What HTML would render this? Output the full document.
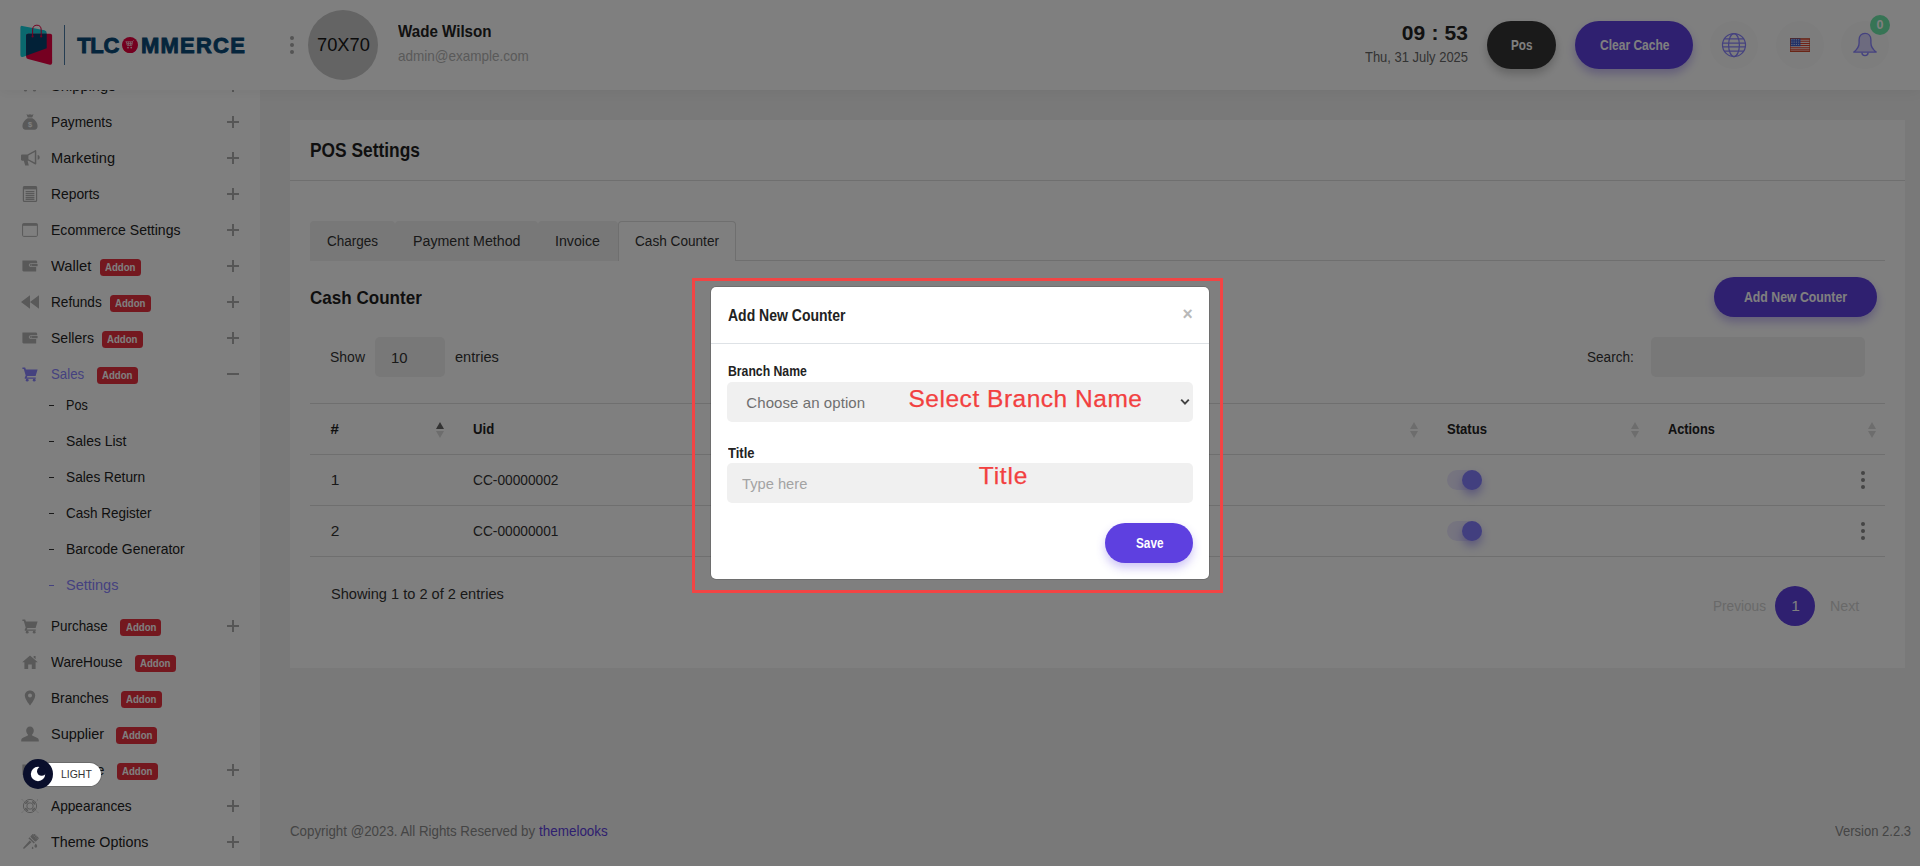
<!DOCTYPE html>
<html lang="en"><head><meta charset="utf-8"><title>POS Settings</title>
<style>
*{box-sizing:border-box;margin:0;padding:0}
html,body{width:1920px;height:866px;overflow:hidden;background:#f2f2f2}
body{font-family:"Liberation Sans",sans-serif;color:#222;position:relative}
.t{position:absolute;white-space:nowrap;line-height:1;display:block;transform-origin:0 0}
.abs{position:absolute}
#page{position:absolute;left:0;top:0;width:1920px;height:866px;overflow:hidden;background:#f2f2f2}
#sidebar{position:absolute;left:0;top:0;width:260px;height:866px;background:#fff;overflow:hidden}
#header{position:absolute;left:0;top:0;width:1920px;height:90px;background:#fff;box-shadow:0 2px 12px rgba(0,0,0,.05);z-index:5}
#card{position:absolute;left:290px;top:120px;width:1615px;height:548px;background:#fff}
.hr{position:absolute;height:1px;background:#dedede}
.badge{position:absolute;height:17px;width:40px;border-radius:3.5px;background:#e8303f;}
.badge .t{color:#fff}
.plus{position:absolute;width:12px;height:12px}
.plus:before{content:"";position:absolute;left:0;top:5.3px;width:12px;height:1.4px;background:#adadad}
.plus.p:after{content:"";position:absolute;left:5.3px;top:0;width:1.4px;height:12px;background:#adadad}
.ico{position:absolute;width:16px;height:16px}
.ico svg{display:block;width:100%;height:100%}
.dash{position:absolute;width:5px;height:1.3px;background:#333}
.tab{position:absolute;top:221px;height:40px;background:#f0f0f0;border-radius:4px 4px 0 0}
.tab.act{background:#fff;border:1px solid #dedede;border-bottom:0;height:40px}
.pill{position:absolute;border-radius:999px}
.inp{position:absolute;background:#f0f0f0;border-radius:5px}
.sort{position:absolute;width:8px;height:16px}
.sort i{position:absolute;left:0;width:0;height:0;border-left:4px solid transparent;border-right:4px solid transparent}
.sort i.u{top:0;border-bottom:7px solid #dadada}
.sort i.d{top:9px;border-top:7px solid #dadada}
.sort.asc i.u{border-bottom-color:#666}
.tog{position:absolute;width:35px;height:20px;border-radius:10px;background:#ece9ff}
.knob{position:absolute;width:20px;height:20px;border-radius:50%;background:#847eff;box-shadow:0 5px 10px rgba(110,96,240,.5)}
.dots{position:absolute;width:4px}
.dots i{display:block;width:4px;height:4px;border-radius:50%;background:#8a8a8a;margin-bottom:3px}
#backdrop{position:absolute;left:0;top:0;width:1920px;height:866px;background:rgba(0,0,0,.5);z-index:10}
#modal{position:absolute;left:711px;top:287px;width:498px;height:292px;background:#fff;box-shadow:0 0 0 .75px rgba(0,0,0,.18);border-radius:5px;z-index:20}
#anno{position:absolute;left:692px;top:278px;width:531px;height:315px;border:3px solid #f24444;z-index:30;pointer-events:none}
.z40{z-index:40}
#theme{position:absolute;z-index:50}

</style></head><body>
<div id="page">
<div id="sidebar">
<span class="ico" style="left:22.0px;top:78.0px;width:16px;height:16px"><svg viewBox="0 0 16 16"><path fill="#b2b2b2" d="M0 4h9v7H0zM10 6h3.5L16 8.5V11h-6z"/><circle cx="3.5" cy="12" r="1.6" fill="#b2b2b2"/><circle cx="12.5" cy="12" r="1.6" fill="#b2b2b2"/></svg></span><span class="t" style="left:51.20px;top:78px;font-size:15px;transform:scaleX(0.9790);color:#222;">Shippings</span><span class="plus p" style="left:227px;top:80px"></span>
<span class="ico" style="left:22.0px;top:114.0px;width:16px;height:16px"><svg viewBox="0 0 16 16"><path fill="#b2b2b2" d="M4.400 0.300c1.200.5 2.400.5 3.600 0 1.200.5 2.400.5 3.600 0l-1.400 3.200H5.800zM5.600 4.300h4.800c3.200 1.900 5.200 4.600 5.200 7.700 0 2.200-1.200 3.700-3.200 3.700H3.600C1.600 15.700.4 14.200.4 12c0-3.100 2-5.800 5.200-7.700z"/><text x="8" y="13.200" font-size="7.500" font-weight="700" text-anchor="middle" fill="#fff" font-family="Liberation Sans, sans-serif">$</text></svg></span><span class="t" style="left:51.20px;top:114px;font-size:15px;transform:scaleX(0.9146);color:#222;">Payments</span><span class="plus p" style="left:227px;top:116px"></span>
<span class="ico" style="left:20.5px;top:150.0px;width:19px;height:16px"><svg viewBox="0 0 19 16"><path fill="#b2b2b2" d="M1.200 4.600h5.200L14.200.2c.5-.3 1.100.1 1.100.7v12.800c0 .6-.6 1-1.100.7l-6.600-3.600H6.600l1.200 4.600H4.200L2.800 10.800H1.200C.5 10.800 0 10.300 0 9.600V5.800c0-.7.500-1.200 1.200-1.200z"/><path fill="#fff" d="M7.400 5.600l6.400-3.600v10.600l-6.400-3.400z"/><path fill="#b2b2b2" d="M16.600 5c1.300.3 2.100 1.200 2.100 2.400s-.8 2.100-2.100 2.400z"/></svg></span><span class="t" style="left:51.20px;top:150px;font-size:15px;transform:scaleX(0.9718);color:#222;">Marketing</span><span class="plus p" style="left:227px;top:152px"></span>
<span class="ico" style="left:22.0px;top:186.0px;width:16px;height:16px"><svg viewBox="0 0 16 16"><rect x="1.400" y="0.600" width="13.200" height="14.800" rx="1" fill="none" stroke="#b2b2b2" stroke-width="1.200"/><path fill="#b2b2b2" d="M1.400 0.600h13.200v2.800H1.400z"/><path stroke="#b2b2b2" stroke-width="1.100" d="M3.600 5.600h8.800M3.600 7.600h8.800M3.600 9.600h8.800M3.600 11.600h8.800M3.600 13.400h8.800"/></svg></span><span class="t" style="left:51.20px;top:186px;font-size:15px;transform:scaleX(0.9234);color:#222;">Reports</span><span class="plus p" style="left:227px;top:188px"></span>
<span class="ico" style="left:22.0px;top:222.0px;width:16px;height:16px"><svg viewBox="0 0 16 16"><rect x="0.600" y="1.600" width="14.800" height="12.800" rx="1" fill="none" stroke="#b2b2b2" stroke-width="1"/><path fill="#b2b2b2" d="M0.600 1.600h14.800v2.200H0.600z"/></svg></span><span class="t" style="left:51.20px;top:222px;font-size:15px;transform:scaleX(0.9358);color:#222;">Ecommerce Settings</span><span class="plus p" style="left:227px;top:224px"></span>
<span class="ico" style="left:22.0px;top:258.0px;width:16px;height:16px"><svg viewBox="0 0 16 16"><path fill="#b2b2b2" d="M0.400 2.600h13.200c1 0 1.600.6 1.600 1.600v1H8.800c-1.200 0-2 .8-2 1.900s.8 1.900 2 1.900h5.400v4.400H1.600c-.7 0-1.200-.5-1.200-1.200z"/><path fill="#b2b2b2" d="M8.800 6h6.800v2.200H8.800a1.100 1.100 0 010-2.200z"/><circle cx="9.200" cy="7.100" r=".6" fill="#fff"/></svg></span><span class="t" style="left:51.20px;top:258px;font-size:15px;transform:scaleX(0.9825);color:#222;">Wallet</span><span class="badge" style="left:100.0px;top:259px;width:41px"><span class="t" style="left:5.25px;top:3px;font-size:11px;transform:scaleX(0.8759);font-weight:700;color:#fff;">Addon</span></span><span class="plus p" style="left:227px;top:260px"></span>
<span class="ico" style="left:21.0px;top:294.0px;width:18px;height:16px"><svg viewBox="0 0 18 16" preserveAspectRatio="none"><path fill="#b2b2b2" d="M9 1.200v13.600L0 8zM18 1.200v13.600L9 8z"/></svg></span><span class="t" style="left:51.20px;top:294px;font-size:15px;transform:scaleX(0.9075);color:#222;">Refunds</span><span class="badge" style="left:110.0px;top:295px;width:41px"><span class="t" style="left:5.25px;top:3px;font-size:11px;transform:scaleX(0.8759);font-weight:700;color:#fff;">Addon</span></span><span class="plus p" style="left:227px;top:296px"></span>
<span class="ico" style="left:22.0px;top:330.0px;width:16px;height:16px"><svg viewBox="0 0 16 16"><path fill="#b2b2b2" d="M0.400 2.600h13.200c1 0 1.600.6 1.600 1.600v1H8.800c-1.200 0-2 .8-2 1.900s.8 1.900 2 1.900h5.400v4.400H1.600c-.7 0-1.200-.5-1.200-1.200z"/><path fill="#b2b2b2" d="M8.800 6h6.800v2.200H8.800a1.100 1.100 0 010-2.200z"/><circle cx="9.200" cy="7.100" r=".6" fill="#fff"/></svg></span><span class="t" style="left:51.20px;top:330px;font-size:15px;transform:scaleX(0.9357);color:#222;">Sellers</span><span class="badge" style="left:102.0px;top:331px;width:41px"><span class="t" style="left:5.25px;top:3px;font-size:11px;transform:scaleX(0.8759);font-weight:700;color:#fff;">Addon</span></span><span class="plus p" style="left:227px;top:332px"></span>
<span class="ico" style="left:22.0px;top:366.0px;width:16px;height:16px"><svg viewBox="0 0 16 16"><path fill="#8a84ff" d="M0.400 1.600h2.800l.7 2h11.700l-2 6.400H5.400l-.6 1.400h9v1.400H3.400c-.6 0-.9-.6-.7-1.100l1-2.300L1.800 3H0.400z"/><circle cx="5.200" cy="14.200" r="1.400" fill="#8a84ff"/><circle cx="12.200" cy="14.200" r="1.400" fill="#8a84ff"/></svg></span><span class="t" style="left:51.20px;top:366px;font-size:15px;transform:scaleX(0.8848);color:#8a84ff;">Sales</span><span class="badge" style="left:97.0px;top:367px;width:41px"><span class="t" style="left:5.25px;top:3px;font-size:11px;transform:scaleX(0.8759);font-weight:700;color:#fff;">Addon</span></span><span class="plus " style="left:227px;top:368px"></span>
<span class="ico" style="left:22.0px;top:618.0px;width:16px;height:16px"><svg viewBox="0 0 16 16"><path fill="#b2b2b2" d="M0.400 1.600h2.800l.7 2h11.700l-2 6.400H5.400l-.6 1.400h9v1.400H3.400c-.6 0-.9-.6-.7-1.100l1-2.300L1.800 3H0.400z"/><circle cx="5.200" cy="14.200" r="1.400" fill="#b2b2b2"/><circle cx="12.200" cy="14.200" r="1.400" fill="#b2b2b2"/></svg></span><span class="t" style="left:51.20px;top:618px;font-size:15px;transform:scaleX(0.8963);color:#222;">Purchase</span><span class="badge" style="left:120.3px;top:619px;width:41px"><span class="t" style="left:5.25px;top:3px;font-size:11px;transform:scaleX(0.8759);font-weight:700;color:#fff;">Addon</span></span><span class="plus p" style="left:227px;top:620px"></span>
<span class="ico" style="left:22.0px;top:654.0px;width:16px;height:16px"><svg viewBox="0 0 16 16"><path fill="#b2b2b2" d="M8 1.400l7.800 6.800h-2.200V15H9.800v-4.400H6.200V15H2.400V8.200H0.200zM11.600 2h2v3.200l-2-1.700z"/></svg></span><span class="t" style="left:51.20px;top:654px;font-size:15px;transform:scaleX(0.9105);color:#222;">WareHouse</span><span class="badge" style="left:135.0px;top:655px;width:41px"><span class="t" style="left:5.25px;top:3px;font-size:11px;transform:scaleX(0.8759);font-weight:700;color:#fff;">Addon</span></span>
<span class="ico" style="left:22.0px;top:690.0px;width:16px;height:16px"><svg viewBox="0 0 16 16"><path fill="#b2b2b2" d="M8 0.400c3 0 5.200 2.200 5.200 5.200C13.200 9.400 8 15.600 8 15.600S2.800 9.400 2.800 5.600C2.800 2.600 5 0.400 8 0.400z"/><circle cx="8" cy="5.600" r="2" fill="#fff"/></svg></span><span class="t" style="left:51.20px;top:690px;font-size:15px;transform:scaleX(0.9090);color:#222;">Branches</span><span class="badge" style="left:121.0px;top:691px;width:41px"><span class="t" style="left:5.25px;top:3px;font-size:11px;transform:scaleX(0.8759);font-weight:700;color:#fff;">Addon</span></span>
<span class="ico" style="left:21.0px;top:726.0px;width:18px;height:16px"><svg viewBox="0 0 18 16" preserveAspectRatio="none"><path fill="#b2b2b2" d="M9 0.400c2.300 0 3.800 1.700 3.800 4.200 0 1.700-.7 3.100-1.700 3.900v1.100l4.900 2.100c1.200.5 1.800 1.500 1.800 2.800v1.100H0.200v-1.100c0-1.300.6-2.300 1.800-2.800l4.900-2.100V8.500C5.900 7.700 5.200 6.300 5.200 4.600 5.200 2.100 6.700.4 9 .4z"/></svg></span><span class="t" style="left:51.20px;top:726px;font-size:15px;transform:scaleX(0.9667);color:#222;">Supplier</span><span class="badge" style="left:116.3px;top:727px;width:41px"><span class="t" style="left:5.25px;top:3px;font-size:11px;transform:scaleX(0.8759);font-weight:700;color:#fff;">Addon</span></span>
<span class="ico" style="left:22.0px;top:762.0px;width:16px;height:16px"><svg viewBox="0 0 16 16"><path fill="#b2b2b2" d="M0.400 2.600h13.200c1 0 1.600.6 1.600 1.600v1H8.800c-1.200 0-2 .8-2 1.900s.8 1.900 2 1.900h5.400v4.400H1.600c-.7 0-1.200-.5-1.200-1.200z"/><path fill="#b2b2b2" d="M8.800 6h6.800v2.200H8.800a1.100 1.100 0 010-2.200z"/><circle cx="9.200" cy="7.100" r=".6" fill="#fff"/></svg></span><span class="t" style="left:51.20px;top:762px;font-size:15px;transform:scaleX(0.9165);color:#222;">Expense</span><span class="badge" style="left:117.0px;top:763px;width:41px"><span class="t" style="left:5.25px;top:3px;font-size:11px;transform:scaleX(0.8759);font-weight:700;color:#fff;">Addon</span></span><span class="plus p" style="left:227px;top:764px"></span>
<span class="ico" style="left:21.0px;top:797.0px;width:18px;height:18px"><svg viewBox="0 0 18 18"><circle cx="9" cy="9" r="6.600" fill="none" stroke="#b2b2b2" stroke-width="1"/><circle cx="9" cy="9" r="3.200" fill="none" stroke="#b2b2b2" stroke-width="1"/><circle cx="9" cy="9" r="5" fill="none" stroke="#b2b2b2" stroke-width="1.600" stroke-dasharray="3.900 3.950" transform="rotate(20 9 9)"/><path stroke="#b2b2b2" stroke-width=".9" stroke-dasharray="1.200 1.400" fill="none" d="M1 2.500l2.200 2.200M17 2.500l-2.200 2.200M1 15.500l2.200-2.200M17 15.500l-2.200-2.200"/></svg></span><span class="t" style="left:51.20px;top:798px;font-size:15px;transform:scaleX(0.9129);color:#222;">Appearances</span><span class="plus p" style="left:227px;top:800px"></span>
<span class="ico" style="left:21.0px;top:834.0px;width:18px;height:16px"><svg viewBox="0 0 18 16"><g transform="rotate(45 12 5)"><rect x="8.200" y="0.200" width="7.600" height="5.200" rx="1" fill="#b2b2b2"/><path d="M9.400 0.400v2.400M11.200 0.400v2.400M13 0.400v2.400M14.600 0.400v2.400" stroke="#fff" stroke-width=".5"/><rect x="8.200" y="6.200" width="7.600" height="1.500" fill="#b2b2b2"/><path d="M10.700 8.400h2.600l-.5 9.400a.8.800 0 01-1.600 0z" fill="#b2b2b2"/></g><path fill="#b2b2b2" d="M14.800 9.600c.8 1.100 1.400 1.900 1.400 2.700a1.400 1.400 0 01-2.800 0c0-.8.600-1.600 1.400-2.700zM11.600 12.400c.5.700.9 1.200.9 1.700a.9.900 0 01-1.800 0c0-.5.400-1 .9-1.700z"/></svg></span><span class="t" style="left:51.20px;top:834px;font-size:15px;transform:scaleX(0.9508);color:#222;">Theme Options</span><span class="plus p" style="left:227px;top:836px"></span>
<span class="dash" style="left:49px;top:405.2px;"></span><span class="t" style="left:66.30px;top:397px;font-size:15px;transform:scaleX(0.8395);color:#222;">Pos</span>
<span class="dash" style="left:49px;top:441.2px;"></span><span class="t" style="left:66.30px;top:433px;font-size:15px;transform:scaleX(0.9288);color:#222;">Sales List</span>
<span class="dash" style="left:49px;top:477.2px;"></span><span class="t" style="left:66.30px;top:469px;font-size:15px;transform:scaleX(0.9134);color:#222;">Sales Return</span>
<span class="dash" style="left:49px;top:513.2px;"></span><span class="t" style="left:66.30px;top:505px;font-size:15px;transform:scaleX(0.8986);color:#222;">Cash Register</span>
<span class="dash" style="left:49px;top:549.2px;"></span><span class="t" style="left:66.30px;top:541px;font-size:15px;transform:scaleX(0.9304);color:#222;">Barcode Generator</span>
<span class="dash" style="left:49px;top:585.2px;background:#8a84ff"></span><span class="t" style="left:66.30px;top:577px;font-size:15px;transform:scaleX(0.9668);color:#8a84ff;">Settings</span>
</div>
<div id="header">
<svg class="abs" style="left:18px;top:22px" width="38" height="46" viewBox="18 22 38 46">
<path d="M22.300 25.900 L44.500 30.300 Q46.700 30.800 46.700 33 L46.700 48.200 L22.800 56.900 Q20.400 57.500 20.400 55 L20.400 27.600 Q20.400 25.500 22.300 25.900Z" fill="#14d0dc"/>
<path d="M28 33.700 L50.200 33.700 Q52.100 33.700 52.100 35.600 L52.100 62.800 Q52.100 65.200 49.800 64.700 L28 59 Q26.100 58.500 26.100 56.500 L26.100 35.600 Q26.100 33.700 28 33.700Z" fill="#ea0042"/>
<path d="M28 33.700 L46.700 33.700 L46.700 48.200 L26.100 55.700 L26.100 35.600 Q26.100 33.700 28 33.700Z" fill="#04426e"/>
<path d="M32.600 36.300 L32.600 30 Q32.600 25.200 36.900 25.200 Q41.200 25.200 41.200 30 L41.200 36.300" fill="none" stroke="#ea0042" stroke-width="1"/>
<circle cx="32.600" cy="36.400" r="1.100" fill="#ea0042"/><circle cx="41.200" cy="36.400" r="1.100" fill="#ea0042"/>
</svg><span class="abs" style="left:64px;top:25px;width:1px;height:40px;background:#4a7aa4"></span><span class="t" style="left:77.20px;top:35px;font-size:22px;letter-spacing:-0.282px;font-weight:700;color:#0a4a78;-webkit-text-stroke:0.9px #0a4a78;">TLC</span><span class="abs" style="left:121.800px;top:36.800px;width:16.400px;height:16.400px;border-radius:50%;background:#e8003e"></span><span class="t" style="left:122.20px;top:36px;font-size:20px;font-weight:700;color:#e8003e;">O</span><svg class="abs" style="left:125px;top:40px" width="11" height="10" viewBox="0 0 11 10"><path d="M0.500 1.800h6.800l1.200-1.400M1.400 1.800l.8 3.600h4.600l.6-3.600M2 3.600h5.200M3.400 1.800v3.600M5.400 1.800v3.600" stroke="#ffd0dc" stroke-width=".8" fill="none"/><circle cx="3" cy="7.600" r=".9" fill="#ffd0dc"/><circle cx="6.200" cy="7.600" r=".9" fill="#ffd0dc"/></svg><span class="t" style="left:141.00px;top:35px;font-size:22px;letter-spacing:1.205px;font-weight:700;color:#0a4a78;-webkit-text-stroke:0.9px #0a4a78;">MMERCE</span>
<span class="dots" style="left:290px;top:35.700px"><i style="background:#a8a8a8"></i><i style="background:#a8a8a8"></i><i style="background:#a8a8a8;margin:0"></i></span><span class="abs" style="left:308px;top:10px;width:70px;height:70px;border-radius:50%;background:#c8c8c8"></span><span class="t" style="left:316.80px;top:35px;font-size:19px;transform:scaleX(0.9610);color:#161616;">70X70</span><span class="t" style="left:398.00px;top:23px;font-size:16.5px;transform:scaleX(0.9175);font-weight:700;color:#222;">Wade Wilson</span><span class="t" style="left:398.00px;top:49px;font-size:14.5px;transform:scaleX(0.9313);color:#b4b4b4;">admin@example.com</span>
<span class="t" style="left:1401.80px;top:22px;font-size:21px;letter-spacing:0.137px;font-weight:700;color:#222;">09 : 53</span><span class="t" style="left:1365.00px;top:49px;font-size:15px;transform:scaleX(0.8638);color:#666;">Thu, 31 July 2025</span><span class="pill" style="left:1487px;top:21px;width:69px;height:48px;background:#343434;box-shadow:0 5px 10px rgba(0,0,0,.22)"></span><span class="t" style="left:1511.00px;top:38px;font-size:14.5px;transform:scaleX(0.8085);font-weight:700;color:#fff;">Pos</span><span class="pill" style="left:1575px;top:21px;width:118px;height:48px;background:#5e40e0;box-shadow:0 5px 10px rgba(94,64,224,.35)"></span><span class="t" style="left:1599.50px;top:38px;font-size:14.5px;transform:scaleX(0.8291);font-weight:700;color:#fff;">Clear Cache</span>
<span class="abs" style="left:1710px;top:21px;width:48px;height:48px;border-radius:50%;background:#fafafa"></span><span class="abs" style="left:1776px;top:21px;width:48px;height:48px;border-radius:50%;background:#fafafa"></span><span class="abs" style="left:1841px;top:21px;width:48px;height:48px;border-radius:50%;background:#fafafa"></span><svg class="abs" style="left:1721px;top:32px" width="26" height="26" viewBox="0 0 26 26" fill="none" stroke="#8a84ff" stroke-width="1.250"><circle cx="13" cy="13" r="11.500"/><ellipse cx="13" cy="13" rx="5.400" ry="11.500"/><path d="M1.700 11.200h22.600M1.700 14.800h22.600M3.400 6.800h19.200M3.400 19.200h19.200"/></svg><svg class="abs" style="left:1790px;top:38px" width="20" height="14" viewBox="0 0 20 14"><rect width="20" height="14" fill="#fbe9e6"/><path d="M0 1.100h20M0 3.250h20M0 5.400h20M0 7.550h20M0 9.700h20M0 11.850h20M0 13.600h20" stroke="#e2422c" stroke-width="1.050"/><rect width="10.400" height="8.200" fill="#3f5fd0"/><path d="M1.200 1.800h8M1.200 4.100h8M1.200 6.400h8" stroke="#e8eeff" stroke-width=".9" stroke-dasharray="1.300 1"/><rect x=".3" y=".3" width="19.400" height="13.400" fill="none" stroke="#c8502e" stroke-width=".6"/></svg><svg class="abs" style="left:1852px;top:32px" width="26" height="26" viewBox="0 0 26 26"><path d="M13 1.300c-3.700 0-5.900 2.700-5.900 6.500v3.200c0 3.400-1.900 6.500-5.300 9.100h22.400c-3.400-2.600-5.300-5.700-5.300-9.100V7.800c0-3.800-2.200-6.500-5.900-6.500z" fill="#dad7ff" stroke="#8a84ff" stroke-width="1.350" stroke-linejoin="round"/><path d="M9.900 20.500a3.100 3.100 0 006.200 0" fill="none" stroke="#8a84ff" stroke-width="1.350"/></svg><span class="abs" style="left:1870px;top:15px;width:20px;height:20px;border-radius:50%;background:#6fe8aa"></span><span class="t" style="left:1876.60px;top:19px;font-size:12.5px;font-weight:700;color:#fff;">0</span></div>
<div id="card"></div>
<span class="t" style="left:310.00px;top:141px;font-size:19.5px;transform:scaleX(0.8905);font-weight:700;color:#1f1f1f;">POS Settings</span><span class="hr" style="left:290px;top:180px;width:1615px"></span><span class="hr" style="left:310px;top:260px;width:1575px"></span><span class="tab" style="left:310px;width:85px"></span><span class="t" style="left:327.00px;top:233px;font-size:15.5px;transform:scaleX(0.8705);color:#333;">Charges</span><span class="tab" style="left:395px;width:142.5px"></span><span class="t" style="left:412.50px;top:233px;font-size:15.5px;transform:scaleX(0.9174);color:#333;">Payment Method</span><span class="tab" style="left:537.5px;width:80.0px"></span><span class="t" style="left:555.00px;top:233px;font-size:15.5px;transform:scaleX(0.9163);color:#333;">Invoice</span><span class="tab act" style="left:617.5px;width:118.0px"></span><span class="t" style="left:634.50px;top:233px;font-size:15.5px;transform:scaleX(0.8783);color:#333;">Cash Counter</span>
<span class="t" style="left:310.20px;top:288px;font-size:19px;transform:scaleX(0.8975);font-weight:700;color:#1f1f1f;">Cash Counter</span><span class="pill" style="left:1714px;top:277px;width:163px;height:40px;background:#5e40e0;box-shadow:0 5px 10px rgba(94,64,224,.35)"></span><span class="t" style="left:1743.80px;top:290px;font-size:14.5px;transform:scaleX(0.8468);font-weight:700;color:#fff;">Add New Counter</span><span class="t" style="left:330.00px;top:349px;font-size:15.5px;transform:scaleX(0.9027);color:#333;">Show</span><span class="inp" style="left:375px;top:337px;width:70px;height:40px"></span><span class="t" style="left:390.50px;top:350px;font-size:15.5px;transform:scaleX(0.9570);color:#333;">10</span><span class="t" style="left:455.00px;top:349px;font-size:15.5px;transform:scaleX(0.9415);color:#333;">entries</span><span class="t" style="left:1586.80px;top:349px;font-size:15.5px;transform:scaleX(0.8761);color:#333;">Search:</span><span class="inp" style="left:1651px;top:337px;width:214px;height:40px"></span>
<span class="hr" style="left:310px;top:403px;width:1575px"></span><span class="hr" style="left:310px;top:454px;width:1575px"></span><span class="hr" style="left:310px;top:505px;width:1575px"></span><span class="hr" style="left:310px;top:556px;width:1575px"></span><span class="t" style="left:330.50px;top:421px;font-size:15px;font-weight:700;color:#222;">#</span><span class="t" style="left:473.20px;top:421px;font-size:15.5px;transform:scaleX(0.8491);font-weight:700;color:#222;">Uid</span><span class="t" style="left:1446.80px;top:421px;font-size:15.5px;transform:scaleX(0.8444);font-weight:700;color:#222;">Status</span><span class="t" style="left:1667.50px;top:421px;font-size:15.5px;transform:scaleX(0.8234);font-weight:700;color:#222;">Actions</span><span class="t" style="left:750.00px;top:421px;font-size:15.5px;font-weight:700;color:#222;">Title</span><span class="t" style="left:1000.00px;top:421px;font-size:15.5px;font-weight:700;color:#222;">Branch</span><span class="sort asc" style="left:436px;top:422px"><i class="u"></i><i class="d"></i></span><span class="sort " style="left:900px;top:422px"><i class="u"></i><i class="d"></i></span><span class="sort " style="left:1409.5px;top:422px"><i class="u"></i><i class="d"></i></span><span class="sort " style="left:1630.5px;top:422px"><i class="u"></i><i class="d"></i></span><span class="sort " style="left:1868px;top:422px"><i class="u"></i><i class="d"></i></span>
<span class="t" style="left:330.80px;top:472px;font-size:15.5px;color:#333;">1</span><span class="t" style="left:473.20px;top:472px;font-size:15px;transform:scaleX(0.9154);color:#333;">CC-00000002</span><span class="tog" style="left:1447px;top:470px"></span><span class="knob" style="left:1462px;top:470px"></span><span class="dots" style="left:1861px;top:471px"><i></i><i></i><i style="margin:0"></i></span>
<span class="t" style="left:330.80px;top:523px;font-size:15.5px;color:#333;">2</span><span class="t" style="left:473.20px;top:523px;font-size:15px;transform:scaleX(0.9154);color:#333;">CC-00000001</span><span class="tog" style="left:1447px;top:521px"></span><span class="knob" style="left:1462px;top:521px"></span><span class="dots" style="left:1861px;top:522px"><i></i><i></i><i style="margin:0"></i></span>
<span class="t" style="left:330.50px;top:586px;font-size:15.5px;transform:scaleX(0.9415);color:#333;">Showing 1 to 2 of 2 entries</span><span class="t" style="left:1712.50px;top:598px;font-size:15.5px;transform:scaleX(0.8789);color:#d2d2d2;">Previous</span><span class="abs" style="left:1775px;top:586px;width:40px;height:40px;border-radius:50%;background:#5e40e0"></span><span class="t" style="left:1791.20px;top:598px;font-size:15.5px;color:#fff;">1</span><span class="t" style="left:1829.50px;top:598px;font-size:15.5px;transform:scaleX(0.9162);color:#d2d2d2;">Next</span>
<span class="t" style="left:290.00px;top:824px;font-size:14.5px;transform:scaleX(0.9180);color:#8a8a8a;">Copyright @2023. All Rights Reserved by </span><span class="t" style="left:538.80px;top:824px;font-size:14.5px;transform:scaleX(0.9278);color:#5e40e0;">themelooks</span><span class="t" style="left:1835.40px;top:824px;font-size:14.5px;transform:scaleX(0.8979);color:#8a8a8a;">Version 2.2.3</span></div>
<div id="backdrop"></div>
<div id="modal">
<span class="t" style="left:16.50px;top:21px;font-size:16px;transform:scaleX(0.8754);font-weight:700;color:#222;">Add New Counter</span><span class="t" style="left:471.40px;top:19px;font-size:17.5px;font-weight:700;color:#b9b9b9;">×</span><span class="hr" style="left:0;top:56px;width:498px;background:#dee2e6"></span><span class="t" style="left:16.50px;top:77px;font-size:14px;transform:scaleX(0.8731);font-weight:700;color:#222;">Branch Name</span><span class="inp" style="left:16px;top:95px;width:466px;height:40px"></span><span class="t" style="left:35.30px;top:108px;font-size:15px;letter-spacing:0.081px;color:#6f6f6f;">Choose an option</span><svg class="abs" style="left:469px;top:110px" width="10" height="10" viewBox="0 0 10 10"><path d="M1.200 2.600L5 6.600l3.800-4" fill="none" stroke="#444" stroke-width="1.900"/></svg><span class="t" style="left:16.50px;top:159px;font-size:14px;transform:scaleX(0.9290);font-weight:700;color:#222;">Title</span><span class="inp" style="left:16px;top:176px;width:466px;height:40px"></span><span class="t" style="left:31.20px;top:189px;font-size:15px;transform:scaleX(0.9789);color:#a3a3a3;">Type here</span><span class="pill" style="left:394px;top:236px;width:88px;height:40px;background:#5e40e0;box-shadow:0 5px 10px rgba(94,64,224,.3)"></span><span class="t" style="left:424.50px;top:249px;font-size:14.5px;transform:scaleX(0.8121);font-weight:700;color:#fff;">Save</span></div>
<div id="anno"></div>
<span class="t z40" style="left:908.50px;top:387px;font-size:24.5px;letter-spacing:0.518px;color:#f24040;-webkit-text-stroke:.25px #f24040;">Select Branch Name</span><span class="t z40" style="left:978.80px;top:464px;font-size:24.5px;letter-spacing:0.781px;color:#f24040;-webkit-text-stroke:.25px #f24040;">Title</span><div id="theme" style="left:0;top:0"><span class="abs" style="left:38px;top:762.500px;width:63px;height:23px;border-radius:12px;background:#fff;box-shadow:0 0 0 1px rgba(0,0,0,.16)"></span><span class="abs" style="left:23px;top:759px;width:30px;height:30px;border-radius:50%;background:#0a0f2c"></span><svg class="abs" style="left:30px;top:766px" width="16" height="16" viewBox="0 0 16 16"><circle cx="8" cy="8" r="7.200" fill="#fff"/><circle cx="11.600" cy="5.200" r="4.600" fill="#0a0f2c"/></svg><span class="t" style="left:60.50px;top:769px;font-size:10.8px;transform:scaleX(0.9684);color:#333;">LIGHT</span></div>
</body></html>
